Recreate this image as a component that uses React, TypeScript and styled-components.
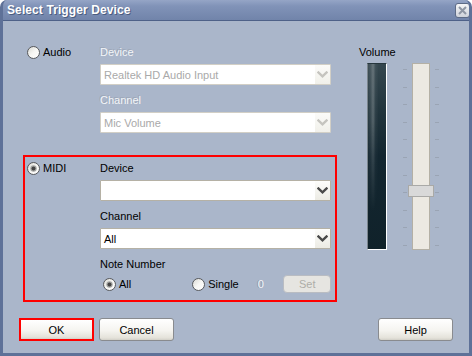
import styled, { createGlobalStyle } from "styled-components";

const GlobalStyle = createGlobalStyle`
  html, body {
    margin: 0;
    padding: 0;
    background: #ffffff;
  }
  body {
    font-family: "Liberation Sans", Arial, sans-serif;
    font-size: 11px;
  }
`;

const Window = styled.div`
  width: 472px;
  height: 356px;
  box-sizing: border-box;
  display: flex;
  flex-direction: column;
  background: #6b7ea6;
  border: 3px solid #5e7198;
  border-top: none;
  border-radius: 7px 7px 0 0;
  overflow: hidden;
`;

const TitleBar = styled.div`
  height: 20px;
  margin: 0 -3px;
  padding: 0 3px 0 7px;
  display: flex;
  align-items: center;
  justify-content: space-between;
  background: linear-gradient(to bottom, #95a5c6 0%, #8193b8 30%, #7184aa 100%);
  border-bottom: 1px solid #4e6188;
`;

const Title = styled.span`
  color: #ffffff;
  font-weight: bold;
  font-size: 12px;
  text-shadow: 1px 1px 0 #4a5c80;
  letter-spacing: 0.1px;
`;

const CloseButton = styled.div`
  width: 15px;
  height: 15px;
  box-sizing: border-box;
  border: 1px solid #5d6b86;
  border-radius: 3px;
  background: linear-gradient(to bottom, #f4f5f7, #cfd3db);
  display: flex;
  align-items: center;
  justify-content: center;
  margin-right: -1px;
`;

const Body = styled.div`
  flex: 1;
  display: flex;
  flex-direction: column;
  background: #aab6ca;
  padding: 18px 16px 11px 20px;
`;

const Main = styled.div`
  display: flex;
`;

const Groups = styled.div`
  display: flex;
  flex-direction: column;
  gap: 13px;
  width: 314px;
`;

const Group = styled.div<{ $outlined?: boolean }>`
  display: flex;
  border: 2px solid ${(p) => (p.$outlined ? "#ff0000" : "transparent")};
  padding: 3px 4px 7px 2px;
`;

const RadioCol = styled.div`
  width: 73px;
`;

const Fields = styled.div`
  width: 231px;
  display: flex;
  flex-direction: column;
  gap: 7px;
`;

const Field = styled.div`
  display: flex;
  flex-direction: column;
  gap: 4px;
`;

const Label = styled.div<{ $disabled?: boolean }>`
  line-height: 16px;
  height: 16px;
  color: ${(p) => (p.$disabled ? "#f3f5f8" : "#000000")};
  text-shadow: ${(p) => (p.$disabled ? "-1px -1px 0 #9ca6b7" : "none")};
`;

const RadioLabel = styled.label<{ $width?: number }>`
  display: flex;
  align-items: center;
  gap: 3px;
  height: 16px;
  line-height: 16px;
  color: #000;
  width: ${(p) => (p.$width ? `${p.$width}px` : "auto")};
`;

const Select = styled.div<{ $disabled?: boolean }>`
  height: 21px;
  box-sizing: border-box;
  display: flex;
  align-items: center;
  background: #ffffff;
  border: 1px solid ${(p) => (p.$disabled ? "#d2cfc6" : "#b5b1a5")};
  border-radius: 1px;
  color: ${(p) => (p.$disabled ? "#a9a9a9" : "#000")};
  padding-left: 3px;
`;

const SelectText = styled.span`
  flex: 1;
`;

const ArrowBox = styled.div<{ $disabled?: boolean }>`
  width: 15px;
  height: 19px;
  display: flex;
  align-items: center;
  justify-content: center;
  background: ${(p) =>
    p.$disabled
      ? "linear-gradient(to bottom, #fbfbf9, #f1f0ea)"
      : "linear-gradient(to bottom, #fdfdfb, #ecebe4)"};
`;

const NoteRow = styled.div`
  display: flex;
  align-items: center;
  height: 18px;
  margin-top: -4px;
  padding-left: 3px;
`;

const DisabledValue = styled.span`
  color: #f3f5f8;
  text-shadow: -1px 0 0 #8f98a8;
  margin-left: 19px;
  width: 26px;
`;

const SetButton = styled.div`
  width: 48px;
  height: 18px;
  box-sizing: border-box;
  border: 1px solid #b9bcc2;
  border-radius: 4px;
  background: #e6e5e1;
  color: #aeada8;
  display: flex;
  align-items: center;
  justify-content: center;
`;

const VolumeCol = styled.div`
  margin-left: 22px;
  padding-top: 6px;
  display: flex;
  flex-direction: column;
`;

const VolumeLabel = styled.div`
  line-height: 14px;
  height: 14px;
  margin-bottom: 4px;
  color: #000;
`;

const MeterRow = styled.div`
  display: flex;
  padding-left: 8px;
`;

const Meter = styled.div`
  position: relative;
  width: 20px;
  height: 187px;
  box-sizing: border-box;
  border-left: 1px solid #7b858c;
  border-top: 1px solid #26363d;
  border-right: 1px solid #ffffff;
  border-bottom: 1px solid #ffffff;
  background: linear-gradient(
    to bottom,
    #35474f 0%,
    #22353d 25%,
    #132630 50%,
    #10222a 100%
  );
  &::before {
    content: "";
    position: absolute;
    inset: 0;
    background: linear-gradient(
      to right,
      rgba(255, 255, 255, 0.04) 0%,
      rgba(255, 255, 255, 0.12) 15%,
      rgba(255, 255, 255, 0.26) 28%,
      rgba(255, 255, 255, 0.06) 42%,
      rgba(255, 255, 255, 0) 60%
    );
    -webkit-mask-image: linear-gradient(to bottom, #000 0%, #000 30%, transparent 80%);
    mask-image: linear-gradient(to bottom, #000 0%, #000 30%, transparent 80%);
  }
`;

const SliderArea = styled.div`
  display: flex;
  gap: 5px;
  margin-left: 16px;
`;

const Ticks = styled.div`
  width: 4px;
  height: 187px;
  box-sizing: border-box;
  padding: 6px 0 4px;
  display: flex;
  flex-direction: column;
  justify-content: space-between;
`;

const Tick = styled.div`
  height: 1px;
  background: #9aa4b4;
`;

const Track = styled.div`
  position: relative;
  width: 18px;
  height: 187px;
  box-sizing: border-box;
  border: 1px solid #b4b0a5;
  background: #ece9e2;
`;

const Thumb = styled.div`
  position: absolute;
  left: -5px;
  top: 121px;
  width: 26px;
  height: 12px;
  box-sizing: border-box;
  border: 1px solid #a9a9a7;
  background: #d9d9d9;
`;

const ButtonRow = styled.div`
  display: flex;
  align-items: center;
  gap: 5px;
  margin-top: 16px;
  margin-left: -4px;
`;

const Button = styled.div<{ $focused?: boolean }>`
  width: 75px;
  height: 23px;
  box-sizing: border-box;
  display: flex;
  align-items: center;
  justify-content: center;
  border: ${(p) => (p.$focused ? "2px solid #ff0000" : "1px solid #898b8f")};
  border-radius: ${(p) => (p.$focused ? "0" : "3px")};
  background: linear-gradient(to bottom, #ffffff 0%, #f5f4f0 55%, #e4e2da 90%, #d2d0c8 100%);
  color: #000;
  font-size: 11px;
`;

const Spacer = styled.div`
  flex: 1;
`;

const Radio = ({ checked }: { checked?: boolean }) => (
  <svg width="13" height="13" viewBox="0 0 13 13">
    <defs>
      <linearGradient id={checked ? "rg1" : "rg0"} x1="0" y1="0" x2="1" y2="1">
        <stop offset="0" stopColor="#d8d8d2" />
        <stop offset="0.5" stopColor="#f7f7f4" />
        <stop offset="1" stopColor="#ffffff" />
      </linearGradient>
    </defs>
    <circle cx="6.5" cy="6.5" r="6" fill={`url(#${checked ? "rg1" : "rg0"})`} stroke="#55575b" strokeWidth="1" />
    {checked && (
      <>
        <circle cx="6.5" cy="6.5" r="3.2" fill="#a5a6a4" />
        <circle cx="6.5" cy="6.5" r="2" fill="#454545" />
      </>
    )}
  </svg>
);

const Chevron = ({ disabled }: { disabled?: boolean }) => (
  <svg width="11" height="7" viewBox="0 0 11 7">
    <path
      d="M1.5 1.5 L5.5 5.3 L9.5 1.5"
      fill="none"
      stroke={disabled ? "#c5c4bf" : "#4a4a4a"}
      strokeWidth="2.4"
      strokeLinecap="square"
    />
  </svg>
);

const Dropdown = ({ value, disabled }: { value: string; disabled?: boolean }) => (
  <Select $disabled={disabled}>
    <SelectText>{value}</SelectText>
    <ArrowBox $disabled={disabled}>
      <Chevron disabled={disabled} />
    </ArrowBox>
  </Select>
);

export default function App() {
  const ticks = Array.from({ length: 11 });
  return (
    <>
      <GlobalStyle />
      <Window>
        <TitleBar>
          <Title>Select Trigger Device</Title>
          <CloseButton>
            <svg width="9" height="9" viewBox="0 0 9 9">
              <path d="M1 1 L8 8 M8 1 L1 8" stroke="#8e96a4" strokeWidth="2" />
            </svg>
          </CloseButton>
        </TitleBar>
        <Body>
          <Main>
            <Groups>
              <Group>
                <RadioCol>
                  <RadioLabel>
                    <Radio />
                    Audio
                  </RadioLabel>
                </RadioCol>
                <Fields>
                  <Field>
                    <Label $disabled>Device</Label>
                    <Dropdown value="Realtek HD Audio Input" disabled />
                  </Field>
                  <Field>
                    <Label $disabled>Channel</Label>
                    <Dropdown value="Mic Volume" disabled />
                  </Field>
                </Fields>
              </Group>
              <Group $outlined>
                <RadioCol>
                  <RadioLabel>
                    <Radio checked />
                    MIDI
                  </RadioLabel>
                </RadioCol>
                <Fields>
                  <Field>
                    <Label>Device</Label>
                    <Dropdown value="" />
                  </Field>
                  <Field>
                    <Label>Channel</Label>
                    <Dropdown value="All" />
                  </Field>
                  <Field>
                    <Label>Note Number</Label>
                  </Field>
                  <NoteRow>
                    <RadioLabel $width={90}>
                      <Radio checked />
                      All
                    </RadioLabel>
                    <RadioLabel>
                      <Radio />
                      Single
                    </RadioLabel>
                    <DisabledValue>0</DisabledValue>
                    <SetButton>Set</SetButton>
                  </NoteRow>
                </Fields>
              </Group>
            </Groups>
            <VolumeCol>
              <VolumeLabel>Volume</VolumeLabel>
              <MeterRow>
                <Meter />
                <SliderArea>
                  <Ticks>
                    {ticks.map((_, i) => (
                      <Tick key={i} />
                    ))}
                  </Ticks>
                  <Track>
                    <Thumb />
                  </Track>
                  <Ticks>
                    {ticks.map((_, i) => (
                      <Tick key={i} />
                    ))}
                  </Ticks>
                </SliderArea>
              </MeterRow>
            </VolumeCol>
          </Main>
          <ButtonRow>
            <Button $focused>OK</Button>
            <Button>Cancel</Button>
            <Spacer />
            <Button>Help</Button>
          </ButtonRow>
        </Body>
      </Window>
    </>
  );
}
